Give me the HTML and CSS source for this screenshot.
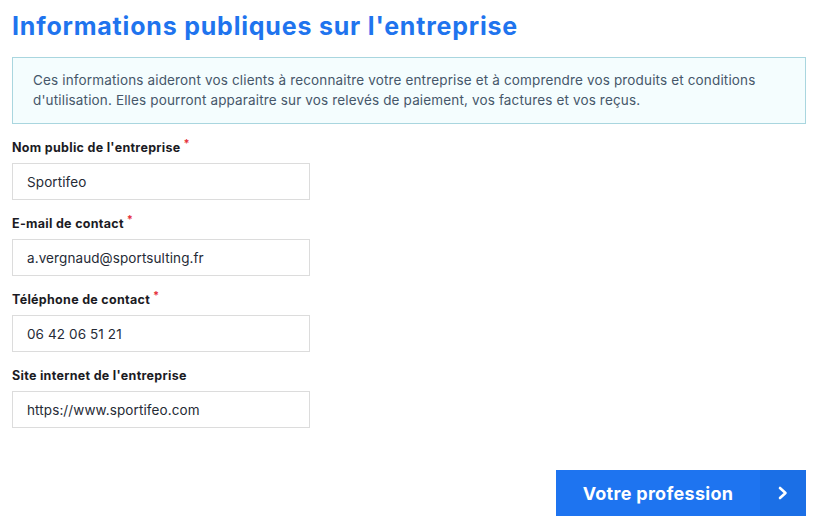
FILE: index.html
```html
<!DOCTYPE html>
<html lang="fr">

<head>
    <meta charset="UTF-8">
    <meta name="viewport" content="width=device-width, initial-scale=1.0">
    <title>Informations publiques</title>
    <link rel="stylesheet" href="styles.css">
</head>

<body>
    <div class="page">
        <h1>Informations publiques sur l'entreprise</h1>

        <div class="info-box">
            Ces informations aideront vos clients à reconnaitre votre entreprise et à comprendre vos produits et conditions
            d'utilisation. Elles pourront apparaitre sur vos relevés de paiement, vos factures et vos reçus.
        </div>

        <div class="form">
            <div class="field">
                <label for="nom">Nom public de l'entreprise<span class="req">*</span></label>
                <input type="text" id="nom" value="Sportifeo">
            </div>
            <div class="field">
                <label for="email">E-mail de contact<span class="req">*</span></label>
                <input type="text" id="email" value="a.vergnaud@sportsulting.fr">
            </div>
            <div class="field">
                <label for="tel">Téléphone de contact<span class="req">*</span></label>
                <input type="text" id="tel" value="06 42 06 51 21">
            </div>
            <div class="field">
                <label for="site">Site internet de l'entreprise</label>
                <input type="text" id="site" value="https://www.sportifeo.com">
            </div>
        </div>

        <div class="actions">
            <button class="next-btn">
                <span class="next-label">Votre profession</span>
                <span class="next-arrow">
                    <svg width="12" height="14" viewBox="0 0 12 14">
                        <path d="M3 2 L8.5 7 L3 12" fill="none" stroke="white" stroke-width="2.6" stroke-linecap="round" stroke-linejoin="round"/>
                    </svg>
                </span>
            </button>
        </div>
    </div>
</body>

</html>
```

FILE: styles.css
```css
* {
    margin: 0;
    padding: 0;
    box-sizing: border-box;
}

body {
    font-family: Inter, "Noto Sans", sans-serif;
    background-color: #ffffff;
    color: #1f2430;
}

.page {
    width: 819px;
    padding: 10px 13px 0 12px;
}

h1 {
    color: #1f74ee;
    font-size: 25px;
    font-weight: 700;
    line-height: 32px;
    letter-spacing: 0.8px;
}

.info-box {
    margin-top: 15px;
    background-color: #f4fdfe;
    border: 1px solid #a9d6df;
    padding: 12px 20px 13px 20px;
    font-size: 13.5px;
    line-height: 20px;
    letter-spacing: 0.15px;
    color: #46576a;
}

.form {
    margin-top: 16px;
    display: flex;
    flex-direction: column;
    gap: 16px;
}

.field {
    display: flex;
    flex-direction: column;
}

label {
    font-size: 12.5px;
    font-weight: 700;
    line-height: 16px;
    letter-spacing: 0.3px;
    color: #1b1b24;
    margin-bottom: 7px;
}

.req {
    color: #e5303a;
    font-size: 11px;
    line-height: 0;
    vertical-align: 5px;
    margin-left: 3px;
}

input {
    width: 298px;
    height: 37px;
    border: 1px solid #dcdcdc;
    padding: 0 14px;
    font-family: Inter, "Noto Sans", sans-serif;
    font-size: 13.5px;
    letter-spacing: 0.1px;
    color: #262b36;
    background-color: #fff;
    outline: none;
}

.actions {
    display: flex;
    justify-content: flex-end;
    margin-top: 42px;
}

.next-btn {
    display: flex;
    width: 250px;
    height: 46px;
    border: none;
    cursor: pointer;
    background-color: #1e74f0;
    color: white;
    font-family: Inter, "Noto Sans", sans-serif;
}

.next-label {
    flex: 1;
    display: flex;
    align-items: center;
    justify-content: center;
    font-size: 18px;
    font-weight: 700;
    letter-spacing: 0.3px;
}

.next-arrow {
    width: 46px;
    display: flex;
    align-items: center;
    justify-content: center;
    background-color: #1b6fe6;
}
```
